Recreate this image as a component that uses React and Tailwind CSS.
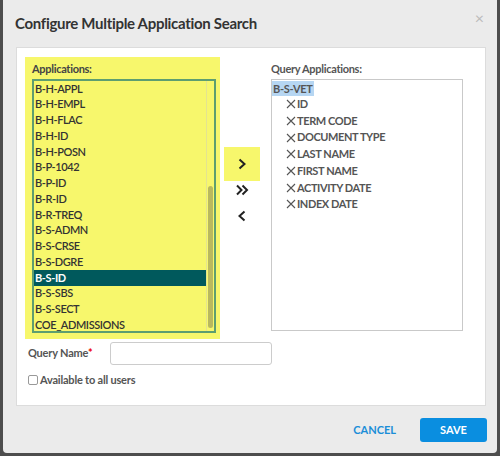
import React from "react";

const apps = [
  "B-H-APPL",
  "B-H-EMPL",
  "B-H-FLAC",
  "B-H-ID",
  "B-H-POSN",
  "B-P-1042",
  "B-P-ID",
  "B-R-ID",
  "B-R-TREQ",
  "B-S-ADMN",
  "B-S-CRSE",
  "B-S-DGRE",
  "B-S-ID",
  "B-S-SBS",
  "B-S-SECT",
  "COE_ADMISSIONS",
];

const fields = [
  "ID",
  "TERM CODE",
  "DOCUMENT TYPE",
  "LAST NAME",
  "FIRST NAME",
  "ACTIVITY DATE",
  "INDEX DATE",
];

const Cross = () => (
  <svg width="10" height="10" viewBox="0 0 10 10" className="mr-[1px] shrink-0">
    <path d="M1 1 L9 9 M9 1 L1 9" stroke="#555" strokeWidth="1.1" />
  </svg>
);

const App = () => {
  return (
    <div
      className="w-[500px] h-[456px] bg-[#4d4d4d] overflow-hidden"
      style={{ fontFamily: "Lato, 'Open Sans', sans-serif" }}
    >
      <div className="ml-[3px] w-[494px] h-[453px] bg-[#ebebeb] rounded-b-[4px] flex flex-col">
        {/* Header */}
        <div className="h-[47px] flex items-start justify-between pl-[12px] pr-[13px]">
          <h1 className="mt-[12px] text-[15px] font-bold text-[#333] tracking-[-0.3px]">
            Configure Multiple Application Search
          </h1>
          <span className="mt-[10px] text-[16px] leading-none text-[#bbb]">×</span>
        </div>

        {/* Body panel */}
        <div className="mx-[13px] w-[470px] h-[359px] bg-white border border-[#dcdcdc] flex flex-col">
          <div className="flex mt-[9px]">
            {/* Applications */}
            <div className="ml-[8px] w-[195px] h-[282px] bg-[#f7f76c] pl-[7px] pt-[4px]">
              <div className="text-[11px] font-bold text-[#444] h-[18px] tracking-[-0.3px]">
                Applications:
              </div>
              <div className="w-[184px] h-[254px] border-2 border-[#5e9e70] flex">
                <div className="flex-1">
                  {apps.map((a) => (
                    <div
                      key={a}
                      className={`h-[15.75px] flex items-center pl-[1px] text-[11px] tracking-[-0.4px] ${
                        a === "B-S-ID" ? "bg-[#00595c] text-white font-bold" : "text-[#333] font-semibold"
                      }`}
                    >
                      {a}
                    </div>
                  ))}
                </div>
                <div className="w-[8px] border-l border-[#e4e490] flex justify-center">
                  <div className="mt-[105px] w-[5px] h-[142px] rounded-full bg-[#b9b95e]" />
                </div>
              </div>
            </div>

            {/* Arrows */}
            <div className="ml-[4px] w-[36px] flex flex-col items-center pt-[90px]">
              <div className="w-[36px] h-[34px] bg-[#f7f76c] flex items-center justify-center">
                <svg width="10" height="12" viewBox="0 0 10 12">
                  <path d="M2.5 1.5 L7.5 6 L2.5 10.5" stroke="#222" strokeWidth="2" fill="none" />
                </svg>
              </div>
              <div className="h-[18px] flex items-center justify-center">
                <svg width="14" height="12" viewBox="0 0 14 12">
                  <path
                    d="M2 1.5 L6.5 6 L2 10.5 M7.5 1.5 L12 6 L7.5 10.5"
                    stroke="#222"
                    strokeWidth="2"
                    fill="none"
                  />
                </svg>
              </div>
              <div className="h-[34px] flex items-center justify-center">
                <svg width="10" height="12" viewBox="0 0 10 12">
                  <path d="M7.5 1.5 L2.5 6 L7.5 10.5" stroke="#222" strokeWidth="2" fill="none" />
                </svg>
              </div>
            </div>

            {/* Query Applications */}
            <div className="ml-[11px] pt-[4px]">
              <div className="text-[11px] font-bold text-[#555] h-[18px] tracking-[-0.3px]">
                Query Applications:
              </div>
              <div className="w-[192px] h-[252px] border border-[#c9c9c9]">
                <div className="h-[16px] flex items-center">
                  <span className="bg-[#b6d6f2] px-[1px] text-[11px] font-bold text-[#555] leading-[15px] tracking-[-0.3px]">
                    B-S-VET
                  </span>
                </div>
                {fields.map((f) => (
                  <div
                    key={f}
                    className="h-[16.7px] flex items-center pl-[14px] text-[11px] font-bold text-[#555] tracking-[-0.4px]"
                  >
                    <Cross />
                    {f}
                  </div>
                ))}
              </div>
            </div>
          </div>

          {/* Query name */}
          <div className="flex items-center mt-[3px] ml-[11px]">
            <label className="w-[82px] text-[11px] font-bold text-[#555] tracking-[-0.2px]">
              Query Name<span className="text-[#e00]">*</span>
            </label>
            <input className="w-[162px] h-[23px] border border-[#ccc] rounded-[3px] outline-none" />
          </div>

          {/* Checkbox */}
          <label className="flex items-center mt-[7px] ml-[11px] text-[11px] font-bold text-[#555] tracking-[-0.2px]">
            <span className="w-[10px] h-[10px] border border-[#999] rounded-[2px] mr-[2px] bg-white" />
            Available to all users
          </label>
        </div>

        {/* Footer */}
        <div className="flex items-center justify-end pr-[10px] mt-[12px]">
          <button className="text-[11px] font-bold text-[#1b8ed8] mr-[24px]">CANCEL</button>
          <button className="w-[67px] h-[24px] rounded-[3px] bg-[#0a8ee0] text-white text-[11px] font-bold">
            SAVE
          </button>
        </div>
      </div>
    </div>
  );
};

export default App;
